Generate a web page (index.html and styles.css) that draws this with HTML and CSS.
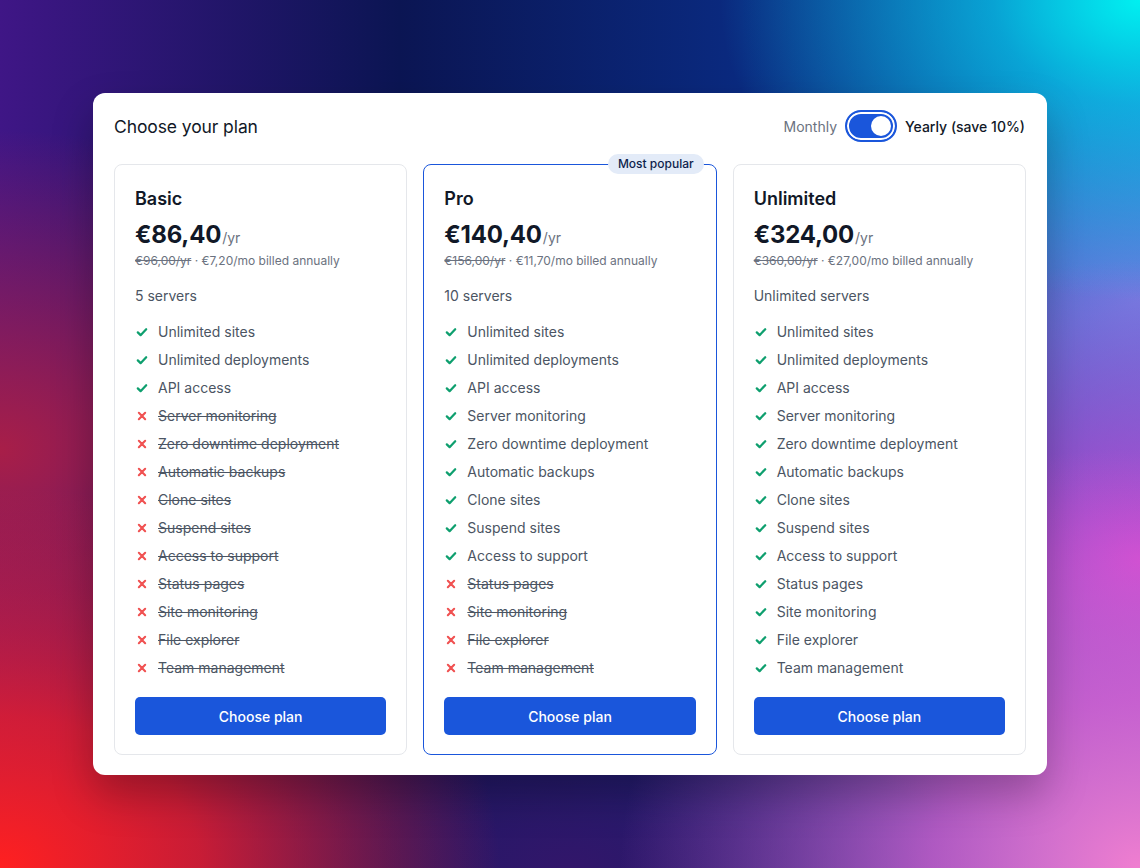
FILE: index.html
```html
<!DOCTYPE html>
<html lang="en">
<head>
<meta charset="utf-8">
<title>Choose your plan</title>
<link rel="stylesheet" href="styles.css">
</head>
<body>
<div class="bg">
  <main class="panel">
    <header class="panel-head">
      <h1 class="title">Choose your plan</h1>
      <div class="billing">
        <span class="bill-label muted">Monthly</span>
        <span class="toggle"><span class="knob"></span></span>
        <span class="bill-label strong">Yearly (save 10%)</span>
      </div>
    </header>
    <div class="plans">
      <section class="card">
        <h2 class="plan-name">Basic</h2>
        <div class="price"><span class="amount">€86,40</span><span class="per">/yr</span></div>
        <div class="sub"><s>€96,00/yr</s> · €7,20/mo billed annually</div>
        <div class="servers">5 servers</div>
        <ul class="features">
          <li class="yes"><svg viewBox="0 0 20 20"><path d="M4 10.5l4 4 8-8.5"/></svg>Unlimited sites</li>
          <li class="yes"><svg viewBox="0 0 20 20"><path d="M4 10.5l4 4 8-8.5"/></svg>Unlimited deployments</li>
          <li class="yes"><svg viewBox="0 0 20 20"><path d="M4 10.5l4 4 8-8.5"/></svg>API access</li>
          <li class="no"><svg viewBox="0 0 20 20"><path d="M5.5 5.5l9 9M14.5 5.5l-9 9"/></svg><s>Server monitoring</s></li>
          <li class="no"><svg viewBox="0 0 20 20"><path d="M5.5 5.5l9 9M14.5 5.5l-9 9"/></svg><s>Zero downtime deployment</s></li>
          <li class="no"><svg viewBox="0 0 20 20"><path d="M5.5 5.5l9 9M14.5 5.5l-9 9"/></svg><s>Automatic backups</s></li>
          <li class="no"><svg viewBox="0 0 20 20"><path d="M5.5 5.5l9 9M14.5 5.5l-9 9"/></svg><s>Clone sites</s></li>
          <li class="no"><svg viewBox="0 0 20 20"><path d="M5.5 5.5l9 9M14.5 5.5l-9 9"/></svg><s>Suspend sites</s></li>
          <li class="no"><svg viewBox="0 0 20 20"><path d="M5.5 5.5l9 9M14.5 5.5l-9 9"/></svg><s>Access to support</s></li>
          <li class="no"><svg viewBox="0 0 20 20"><path d="M5.5 5.5l9 9M14.5 5.5l-9 9"/></svg><s>Status pages</s></li>
          <li class="no"><svg viewBox="0 0 20 20"><path d="M5.5 5.5l9 9M14.5 5.5l-9 9"/></svg><s>Site monitoring</s></li>
          <li class="no"><svg viewBox="0 0 20 20"><path d="M5.5 5.5l9 9M14.5 5.5l-9 9"/></svg><s>File explorer</s></li>
          <li class="no"><svg viewBox="0 0 20 20"><path d="M5.5 5.5l9 9M14.5 5.5l-9 9"/></svg><s>Team management</s></li>
        </ul>
        <button class="choose">Choose plan</button>
      </section>
      <section class="card popular">
        <span class="badge">Most popular</span>
        <h2 class="plan-name">Pro</h2>
        <div class="price"><span class="amount">€140,40</span><span class="per">/yr</span></div>
        <div class="sub"><s>€156,00/yr</s> · €11,70/mo billed annually</div>
        <div class="servers">10 servers</div>
        <ul class="features">
          <li class="yes"><svg viewBox="0 0 20 20"><path d="M4 10.5l4 4 8-8.5"/></svg>Unlimited sites</li>
          <li class="yes"><svg viewBox="0 0 20 20"><path d="M4 10.5l4 4 8-8.5"/></svg>Unlimited deployments</li>
          <li class="yes"><svg viewBox="0 0 20 20"><path d="M4 10.5l4 4 8-8.5"/></svg>API access</li>
          <li class="yes"><svg viewBox="0 0 20 20"><path d="M4 10.5l4 4 8-8.5"/></svg>Server monitoring</li>
          <li class="yes"><svg viewBox="0 0 20 20"><path d="M4 10.5l4 4 8-8.5"/></svg>Zero downtime deployment</li>
          <li class="yes"><svg viewBox="0 0 20 20"><path d="M4 10.5l4 4 8-8.5"/></svg>Automatic backups</li>
          <li class="yes"><svg viewBox="0 0 20 20"><path d="M4 10.5l4 4 8-8.5"/></svg>Clone sites</li>
          <li class="yes"><svg viewBox="0 0 20 20"><path d="M4 10.5l4 4 8-8.5"/></svg>Suspend sites</li>
          <li class="yes"><svg viewBox="0 0 20 20"><path d="M4 10.5l4 4 8-8.5"/></svg>Access to support</li>
          <li class="no"><svg viewBox="0 0 20 20"><path d="M5.5 5.5l9 9M14.5 5.5l-9 9"/></svg><s>Status pages</s></li>
          <li class="no"><svg viewBox="0 0 20 20"><path d="M5.5 5.5l9 9M14.5 5.5l-9 9"/></svg><s>Site monitoring</s></li>
          <li class="no"><svg viewBox="0 0 20 20"><path d="M5.5 5.5l9 9M14.5 5.5l-9 9"/></svg><s>File explorer</s></li>
          <li class="no"><svg viewBox="0 0 20 20"><path d="M5.5 5.5l9 9M14.5 5.5l-9 9"/></svg><s>Team management</s></li>
        </ul>
        <button class="choose">Choose plan</button>
      </section>
      <section class="card">
        <h2 class="plan-name">Unlimited</h2>
        <div class="price"><span class="amount">€324,00</span><span class="per">/yr</span></div>
        <div class="sub"><s>€360,00/yr</s> · €27,00/mo billed annually</div>
        <div class="servers">Unlimited servers</div>
        <ul class="features">
          <li class="yes"><svg viewBox="0 0 20 20"><path d="M4 10.5l4 4 8-8.5"/></svg>Unlimited sites</li>
          <li class="yes"><svg viewBox="0 0 20 20"><path d="M4 10.5l4 4 8-8.5"/></svg>Unlimited deployments</li>
          <li class="yes"><svg viewBox="0 0 20 20"><path d="M4 10.5l4 4 8-8.5"/></svg>API access</li>
          <li class="yes"><svg viewBox="0 0 20 20"><path d="M4 10.5l4 4 8-8.5"/></svg>Server monitoring</li>
          <li class="yes"><svg viewBox="0 0 20 20"><path d="M4 10.5l4 4 8-8.5"/></svg>Zero downtime deployment</li>
          <li class="yes"><svg viewBox="0 0 20 20"><path d="M4 10.5l4 4 8-8.5"/></svg>Automatic backups</li>
          <li class="yes"><svg viewBox="0 0 20 20"><path d="M4 10.5l4 4 8-8.5"/></svg>Clone sites</li>
          <li class="yes"><svg viewBox="0 0 20 20"><path d="M4 10.5l4 4 8-8.5"/></svg>Suspend sites</li>
          <li class="yes"><svg viewBox="0 0 20 20"><path d="M4 10.5l4 4 8-8.5"/></svg>Access to support</li>
          <li class="yes"><svg viewBox="0 0 20 20"><path d="M4 10.5l4 4 8-8.5"/></svg>Status pages</li>
          <li class="yes"><svg viewBox="0 0 20 20"><path d="M4 10.5l4 4 8-8.5"/></svg>Site monitoring</li>
          <li class="yes"><svg viewBox="0 0 20 20"><path d="M4 10.5l4 4 8-8.5"/></svg>File explorer</li>
          <li class="yes"><svg viewBox="0 0 20 20"><path d="M4 10.5l4 4 8-8.5"/></svg>Team management</li>
        </ul>
        <button class="choose">Choose plan</button>
      </section>
    </div>
  </main>
</div>
</body>
</html>
```

FILE: styles.css
```css
* { box-sizing: border-box; }
html, body { margin: 0; padding: 0; }
body {
  font-family: Inter, "Noto Sans", "Liberation Sans", sans-serif;
  color: #111827;
  width: 1140px;
  height: 868px;
  overflow: hidden;
}
.bg {
  width: 1140px;
  height: 868px;
  padding: 93px 93px 0 93px;
  background:
    radial-gradient(ellipse 420px 300px at 1140px 0px, #00f0f0 0%, rgba(0,220,240,0.6) 35%, rgba(0,150,220,0) 100%),
    radial-gradient(ellipse 520px 420px at 1140px 868px, #f07ed0 0%, rgba(225,100,210,0.75) 40%, rgba(200,70,210,0) 100%),
    radial-gradient(ellipse 500px 380px at 0px 868px, #ff2020 0%, rgba(240,30,40,0.8) 40%, rgba(200,25,60,0) 100%),
    radial-gradient(ellipse 380px 300px at 1140px 560px, #c848d2 0%, rgba(200,72,210,0) 100%),
    radial-gradient(ellipse 360px 240px at 1140px 300px, #6a7ee0 0%, rgba(106,126,224,0) 100%),
    radial-gradient(ellipse 420px 320px at 0px 450px, #a81e48 0%, rgba(160,30,70,0) 100%),
    radial-gradient(ellipse 500px 260px at 570px 868px, #32166a 0%, rgba(50,22,106,0) 100%),
    linear-gradient(90deg, #3f1686 0%, #0b1553 35%, #0a2a80 65%, #1a60c0 100%);
}
.panel {
  width: 954px;
  height: 682px;
  background: #ffffff;
  border-radius: 12px;
  padding: 17px 21px 20px 21px;
  box-shadow: 0 20px 40px rgba(0,0,0,0.25);
  display: flex;
  flex-direction: column;
}
.panel-head {
  display: flex;
  align-items: center;
  justify-content: space-between;
  height: 32px;
  margin-bottom: 22px;
}
.title {
  margin: 0;
  font-size: 17.5px;
  font-weight: 400;
  color: #111827;
  letter-spacing: -0.1px;
}
.billing {
  display: flex;
  align-items: center;
  gap: 8px;
  margin-right: 1px;
}
.bill-label { font-size: 14px; }
.muted { color: #6b7280; }
.strong { color: #111827; font-weight: 500; }
.toggle {
  width: 52px;
  height: 32px;
  border-radius: 16px;
  background: #1a56db;
  border: 2px solid #1a56db;
  box-shadow: inset 0 0 0 2px #ffffff;
  display: flex;
  align-items: center;
  justify-content: flex-end;
  padding: 0 4px;
}
.knob {
  width: 20px;
  height: 20px;
  border-radius: 50%;
  background: #ffffff;
}
.plans {
  display: grid;
  grid-template-columns: repeat(3, 1fr);
  gap: 16px;
  flex: 1;
}
.card {
  position: relative;
  border: 1px solid #e5e7eb;
  border-radius: 8px;
  padding: 20px 20px 19px 20px;
  display: flex;
  flex-direction: column;
}
.card.popular { border-color: #1a56db; }
.badge {
  position: absolute;
  top: -11px;
  right: 12px;
  background: #e3ebf8;
  color: #0f1f4d;
  font-size: 12px;
  font-weight: 500;
  line-height: 20px;
  padding: 0 10px;
  border-radius: 10px;
}
.plan-name {
  margin: 0;
  font-size: 18px;
  line-height: 28px;
  font-weight: 600;
  color: #111827;
}
.price {
  margin-top: 6px;
  line-height: 32px;
  display: flex;
  align-items: baseline;
}
.amount {
  font-size: 24px;
  font-weight: 700;
  color: #111827;
  letter-spacing: -0.2px;
}
.per {
  font-size: 14px;
  color: #6b7280;
  margin-left: 1px;
}
.sub {
  font-size: 12px;
  line-height: 16px;
  color: #6b7280;
  margin-top: -1px;
}
.sub s { color: #6b7280; }
.servers {
  margin-top: 17px;
  font-size: 14px;
  line-height: 20px;
  color: #4b5563;
}
.features {
  list-style: none;
  margin: 16px 0 0 0;
  padding: 0;
  display: flex;
  flex-direction: column;
  gap: 8px;
}
.features li {
  display: flex;
  align-items: center;
  gap: 9px;
  font-size: 14px;
  line-height: 20px;
  color: #4b5563;
}
.features svg {
  width: 14px;
  height: 14px;
  flex: none;
  fill: none;
  stroke-linecap: round;
  stroke-linejoin: round;
}
.features .yes svg { stroke: #0e9f6e; stroke-width: 3.2; }
.features .no svg { stroke: #f05252; stroke-width: 3; }
.features s { color: #4b5563; }
.choose {
  margin-top: 19px;
  height: 38px;
  width: 100%;
  border: none;
  border-radius: 5px;
  background: #1a56db;
  color: #ffffff;
  font-family: inherit;
  font-size: 14px;
  font-weight: 500;
}
```
